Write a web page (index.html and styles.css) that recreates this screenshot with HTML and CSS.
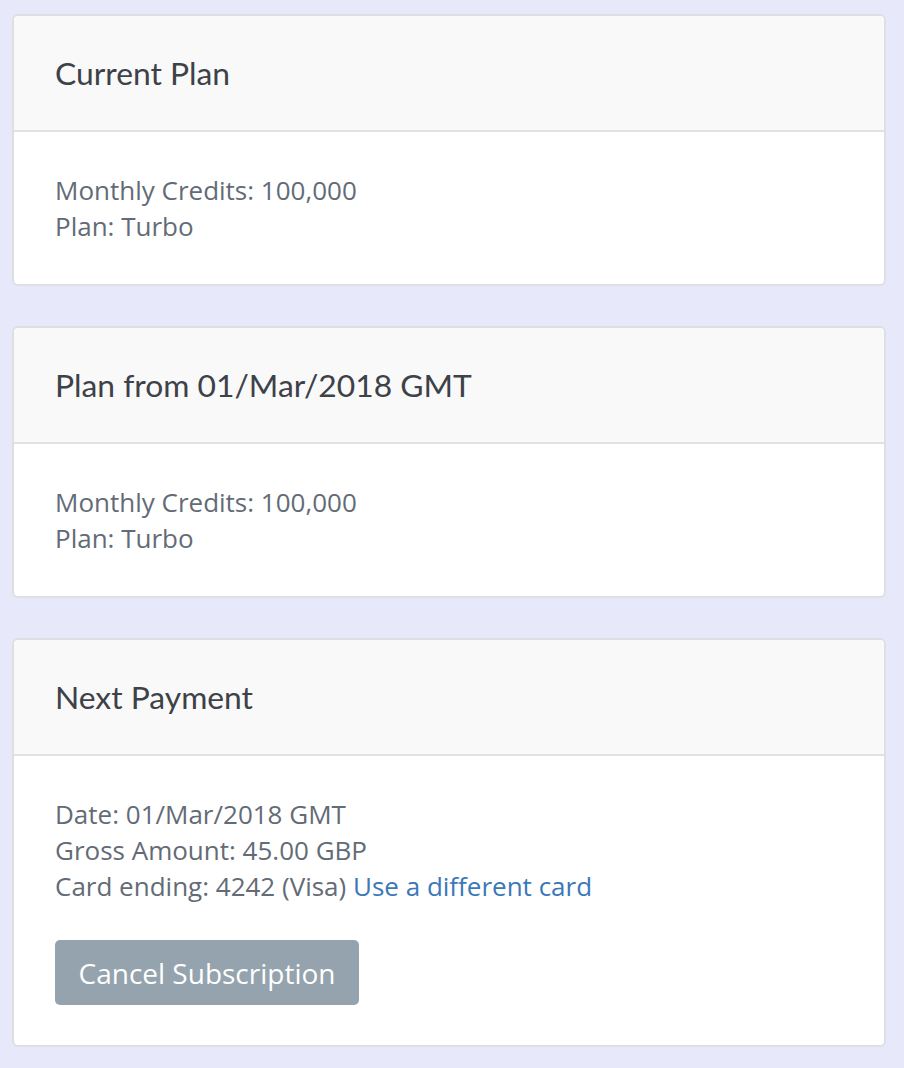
FILE: index.html
```html
<!DOCTYPE html>
<html>
<head>
<meta charset="utf-8">
<link rel="stylesheet" href="styles.css">
</head>
<body>
<div class="page">
  <section class="card">
    <div class="card-header"><h2>Current Plan</h2></div>
    <div class="card-body">
      <div class="line">Monthly Credits: 100,000</div>
      <div class="line">Plan: Turbo</div>
    </div>
  </section>
  <section class="card">
    <div class="card-header"><h2>Plan from 01/Mar/2018 GMT</h2></div>
    <div class="card-body">
      <div class="line">Monthly Credits: 100,000</div>
      <div class="line">Plan: Turbo</div>
    </div>
  </section>
  <section class="card">
    <div class="card-header"><h2>Next Payment</h2></div>
    <div class="card-body">
      <div class="line">Date: 01/Mar/2018 GMT</div>
      <div class="line">Gross Amount: 45.00 GBP</div>
      <div class="line">Card ending: 4242 (Visa) <a class="link" href="#">Use a different card</a></div>
      <button class="btn">Cancel Subscription</button>
    </div>
  </section>
</div>
</body>
</html>
```
FILE: styles.css
```css
html, body {
  margin: 0;
  padding: 0;
  background: #e8e8fb;
}
.page {
  padding: 14px 18px 0 12px;
  display: flex;
  flex-direction: column;
  gap: 40px;
}
.card {
  background: #fff;
  border: 2px solid #dedfe3;
  border-radius: 6px;
  overflow: hidden;
}
.card-header {
  background: #f9f9f9;
  border-bottom: 2px solid #e2e2e4;
  padding: 40px 41px;
  height: 34px;
}
.card-header h2 {
  margin: 0;
  font-family: Lato, "Open Sans", sans-serif;
  font-weight: 400;
  font-size: 31.8px;
  line-height: 34px;
  color: #3d4148;
}
.card-body {
  padding: 40px 41px 40px;
  font-family: "Open Sans", sans-serif;
  font-size: 26px;
  line-height: 36px;
  color: #636b76;
}
.link {
  color: #3a78b8;
  text-decoration: none;
}
.btn {
  display: block;
  margin-top: 36px;
  width: 304px;
  height: 65px;
  background: #94a3ad;
  color: #fff;
  border: none;
  border-radius: 5px;
  font-family: "Open Sans", sans-serif;
  font-size: 28px;
  padding: 0;
}
```
